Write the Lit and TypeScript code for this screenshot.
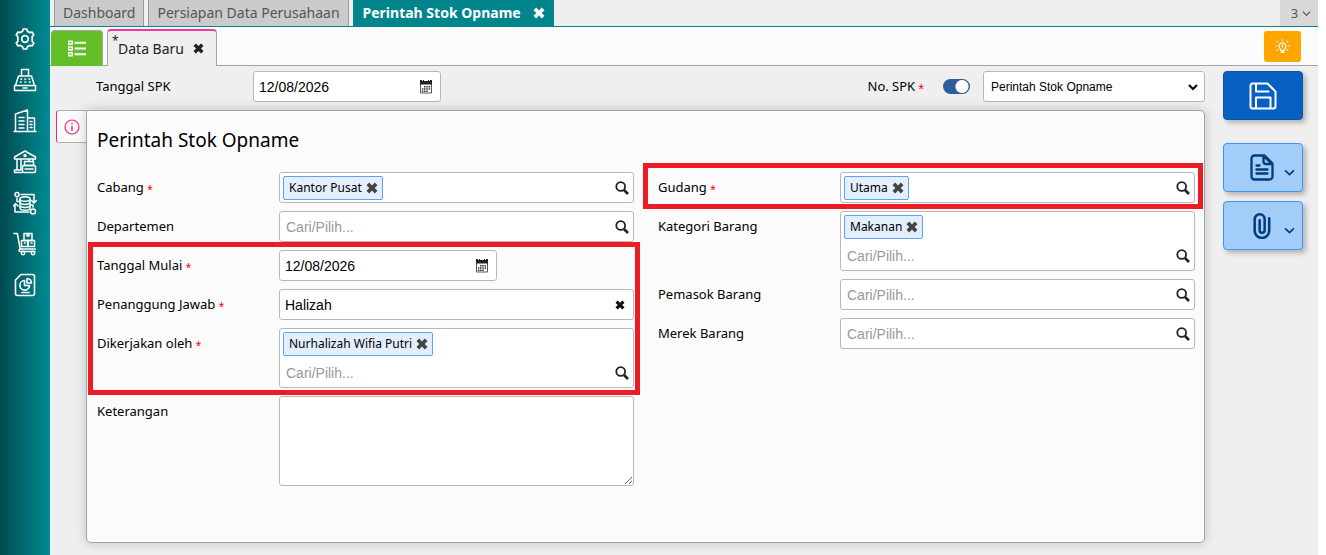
import { LitElement, html, css, svg, nothing } from "lit";
import { customElement, property } from "lit/decorators.js";

const stroke = (body: unknown, size = 24, box = 24) => html`<svg
  class="icon"
  width=${size}
  height=${size}
  viewBox="0 0 ${box} ${box}"
  fill="none"
  stroke="currentColor"
  stroke-linecap="round"
  stroke-linejoin="round"
  aria-hidden="true"
>${body}</svg>`;

const gear = svg`<g stroke-width="1.7"><path d="M9.6 4.2 10.3 2h3.4l.7 2.2 2.4 1.4 2.3-.5 1.7 2.9-1.6 1.7v4.6l1.6 1.7-1.7 2.9-2.3-.5-2.4 1.4-.7 2.2h-3.4l-.7-2.2-2.4-1.4-2.3.5L3.200 16l1.600-1.700V9.700L3.200 8l1.700-2.900 2.300.5z"/><circle cx="12" cy="12" r="3.300"/></g>`;
const register = svg`<g stroke-width="1.5"><path d="M8.500 8V1.500h7V8M5.500 8h13l3 9.500h-19zM1.500 17.500h21v5h-21zM10 20h4"/><path d="M8 11h.5M12 11h.5M16 11h.5M7.500 14h.5M12 14h.5M16.500 14h.5" stroke-width="1.700"/></g>`;
const building = svg`<g stroke-width="1.500"><path d="M1 22.500h22M2.500 22.500V5L14.500 1v21.500M14.500 9H21.500v13.500"/><path d="M6 8.500h5M6 12h5M6 15.500h5M6 19h5M17 12.500h2M17 15.500h2M17 18.500h2"/></g>`;
const bank = svg`<g stroke-width="1.500"><path d="M1.500 9V7L12 1l10.500 6v2zM4 9v11M8 9v11M1.500 22.500V20H8M1.500 22.500H9M16 9v2M20 9v2"/><circle cx="12" cy="5.500" r="1"/><rect x="11.500" y="11.500" width="9" height="4"/><rect x="9.500" y="15.500" width="13" height="7" rx="1.500"/><path d="M12 19h8"/></g>`;
const cycle = svg`<g stroke-width="1.500"><circle cx="4" cy="3.500" r="2"/><circle cx="20" cy="20.500" r="2.500"/><path d="M8 3.500h13v8M18.500 9.500l2.500 2.500 2.500-2.500M16 21H2v-8M.500 15L2.500 12.500 5 15"/><ellipse cx="12" cy="8" rx="5" ry="2.300"/><path d="M7 8v9c0 3 10 3 10 0V8M7 11.500c1 2.500 9 2.500 10 0M7 14.500c1 2.500 9 2.500 10 0M4 7v3.500h3M20 16v-2h-3"/></g>`;
const trolley = svg`<g stroke-width="1.500"><path d="M.800 1.500h3.500l3 15.500h15"/><rect x="11" y="1.500" width="8" height="7"/><rect x="8.500" y="8.500" width="6.500" height="6"/><rect x="15" y="8.500" width="6.500" height="6"/><path d="M14 1.500v2.500h2V1.500M11.500 11h1M18 11h1M7.500 17c-2 0-2 2.500 0 2.500h14.500"/><circle cx="10" cy="21" r="1.700"/><circle cx="20" cy="21" r="1.700"/></g>`;
const report = svg`<g stroke-width="1.600"><path d="M8 1.500h11.500a2 2 0 0 1 2 2v17a2 2 0 0 1-2 2H4.500a2 2 0 0 1-2-2V7z"/><path d="M11.500 7.500a4.800 4.800 0 1 0 5 5h-5zM14 5.500v4.500h4.500A4.500 4.500 0 0 0 14 5.500zM9 19.500h7"/></g>`;

const cross = (size: number) => html`<svg class="icon" width=${size} height=${size} viewBox="0 0 12 12" aria-hidden="true">
  <path fill="currentColor" d="M3.200.500 6 3.400 8.800.500 11.500 3.200 8.600 6l2.900 2.800-2.700 2.700L6 8.600l-2.800 2.900L.500 8.800 3.400 6 .500 3.200z" /></svg>`;
const magnifier = html`<svg class="icon" width="14" height="14" viewBox="0 0 14 14" fill="none" stroke="currentColor" aria-hidden="true">
  <circle cx="5.700" cy="5.500" r="4.400" stroke-width="1.800" /><path d="M9 9l4 4" stroke-width="2.600" /></svg>`;
const calendar = html`<svg class="icon" width="14" height="14" viewBox="0 0 14 14" aria-hidden="true">
  <path fill="#fff" stroke="#555" d="M1.500 3.500h11v9.500h-11z" /><path fill="#222" d="M1 0h2v1h1V0h1v1h4V0h1v1h1V0h2v4.500H1z" />
  <path fill="#333" d="M5 6h1.500v1.500H5zM7.300 6h1.500v1.500H7.300zM9.600 6h1.500v1.500H9.600zM2.900 8.200h1.500v1.500H2.900zM5 8.200h1.500v1.500H5zM7.300 8.200h1.500v1.500H7.300zM9.600 8.200h1.500v1.500H9.600zM2.900 10.400h1.500v1.500H2.900zM5 10.400h1.500v1.500H5zM7.300 10.400h1.500v1.500H7.300z" /></svg>`;
const chevron = (w: number, sw = 1.5) => html`<svg class="icon" width=${w} height=${w} viewBox="0 0 10 10" fill="none" stroke="currentColor" stroke-width=${sw} aria-hidden="true">
  <path d="M1 3l4 4 4-4" /></svg>`;
const save = stroke(svg`<g stroke-width="2"><path d="M3.500 1.500h15l8 8v15a2 2 0 0 1-2 2h-21a2 2 0 0 1-2-2v-21a2 2 0 0 1 2-2z"/><path d="M7 2v7.500h12.500M7 26V15.500h14.500V26"/></g>`, 28, 28);
const doc = stroke(svg`<g stroke-width="2.300"><path d="M4.500 1.500h10l8 8v13a3 3 0 0 1-3 3h-15a3 3 0 0 1-3-3v-18a3 3 0 0 1 3-3zM13.500 2v5.500a2.500 2.500 0 0 0 2.500 2.500h6z"/><path d="M6.500 11.500h3M6.500 15.500h11M6.500 19.500h11"/></g>`, 27, 27);
const clip = stroke(svg`<path stroke-width="2.400" d="M18.500 6v12a7 7 0 0 1-14 0V7a4.800 4.800 0 0 1 9.600 0v10.500a2.400 2.400 0 0 1-4.800 0V8"/>`, 27, 26);
const bulb = stroke(svg`<g stroke-width="1.100"><path d="M5.300 9.700C3.500 8.200 3.500 5.800 4.800 4.400a3.100 3.100 0 0 1 4.400 0c1.300 1.400 1.300 3.800-.5 5.300v1.300H5.300zM7 5v2.500M5.800 12.500h2.400M7 .600v.8M2 2l.6.600M12 2l-.6.600M.800 6.500h.9M12.300 6.500h.9M2 10.500l.6-.5M12 10.500l-.6-.5"/></g>`, 15, 14);
const list = html`<svg class="icon" width="18" height="17" viewBox="0 0 18 17" fill="none" stroke="currentColor" aria-hidden="true">
  <path stroke-width="1.400" d="M.700 1.200h3.500v3H.700zM.700 7h3.500v3H.700zM.700 12.800h3.500v3H.700z" /><path stroke-width="2" d="M6.500 2.700H18M6.500 8.500H18M6.500 14.300H18" /></svg>`;
const info = stroke(svg`<circle cx="8" cy="8" r="7" stroke-width="1.200"/><path stroke-width="1.500" d="M8 7.200v4M8 4.500v.2"/>`, 16, 16);

const controls = css`
  :host { display: block; }
  * { box-sizing: border-box; }
  .icon { display: block; flex: none; }
  button {
    display: flex; align-items: center; justify-content: center;
    margin: 0; padding: 0; border: 0; background: none; color: inherit; font: inherit; cursor: pointer;
  }
  input, select, textarea { font-family: "Liberation Sans", Arial, sans-serif; font-size: 14px; color: #000; margin: 0; }
  .box { display: flex; background: #fff; border: 1px solid #b8b8b8; border-radius: 3px; min-height: 31px; }
  .text { flex: 1; min-width: 0; border: 0; outline: 0; background: none; padding: 0 6px; }
  .text::placeholder { color: #999; }
`;

@customElement("date-field")
class DateField extends LitElement {
  @property() value = "";
  @property() label = "";
  static styles = [controls, css`
    .box { height: 31px; }
    .text { padding-left: 5px; }
    .pick { padding: 0 7px; }
  `];
  render() {
    return html`<div class="box">
      <input class="text" type="text" aria-label=${this.label} .value=${this.value} />
      <button class="pick" aria-label="Kalender">${calendar}</button>
    </div>`;
  }
}

@customElement("lookup-field")
class LookupField extends LitElement {
  @property() label = "";
  @property() chip = "";
  @property({ type: Boolean }) multiple = false;
  static styles = [controls, css`
    .box { padding: 0 3px; }
    .stacked { flex-direction: column; }
    .chips { display: flex; align-items: center; height: 29px; }
    .chip {
      display: flex; align-items: center; gap: 4px; height: 24px; padding: 0 4px 0 5px;
      border: 1px solid #62a1f2; border-radius: 2px; background: #e3effd;
      font-size: 12px; white-space: nowrap;
    }
    .remove { color: #444; }
    .line { display: flex; flex: 1; min-width: 0; height: 29px; }
    .stacked .line { flex: none; }
    .text { padding: 0 3px; }
    .find { padding: 0 1px; color: #222; }
  `];
  render() {
    return html`<div class="box ${this.multiple ? "stacked" : ""}">
      ${this.chip
        ? html`<div class="chips"><span class="chip">${this.chip}<button class="remove" aria-label="Hapus ${this.chip}">${cross(12)}</button></span></div>`
        : nothing}
      <div class="line">
        <input class="text" type="text" aria-label=${this.label} placeholder=${this.chip && !this.multiple ? "" : "Cari/Pilih..."} />
        <button class="find" aria-label="Cari ${this.label}">${magnifier}</button>
      </div>
    </div>`;
  }
}

@customElement("app-root")
class AppRoot extends LitElement {
  static styles = [controls, css`
    :host {
      display: flex; min-height: 100vh; background: #fff; color: #000;
      font-family: "Noto Sans", sans-serif; font-size: 13px;
    }
    .side {
      flex: none; width: 50px; padding-top: 27px; color: #fff;
      display: flex; flex-direction: column; align-items: center; gap: 17px;
      background: linear-gradient(90deg, #004b50, #008b93);
    }
    .main { flex: 1; min-width: 0; display: flex; flex-direction: column; margin-right: 8px; background: #efefef; }

    .tabs { display: flex; gap: 4px; height: 27px; padding-left: 4px; border-bottom: 1px solid #00868c; }
    .tab {
      display: flex; align-items: center; padding: 0 8px 1px; background: #cbcbcb; color: #555;
      border-left: 1px solid #999; border-right: 1px solid #999; font-size: 14px; white-space: nowrap;
    }
    .tab.current { gap: 12px; padding: 0 8px 1px 9px; background: #00858c; color: #fff; border-color: #00858c; font-weight: 700; }
    .count { gap: 4px; width: 38px; padding-left: 4px; margin-left: auto; background: #d8d8d8; color: #555; }

    .subtabs { display: flex; gap: 4px; height: 39px; padding: 2px 17px 0 1px; background: #fbfbfb; border-bottom: 1px solid #a5a5a5; }
    .listing { width: 52px; height: 36px; margin-top: 1px; background: #64be28; color: #fff; border-radius: 4px 4px 0 0; border: 1px solid #a5a5a5; border-width: 1px 1px 0 0; }
    .draft {
      display: flex; align-items: center; gap: 9px; height: 37px; padding: 0 12px 0 4px; color: #222;
      border: 1px solid #a5a5a5; border-top: 2px solid #ee3a9a; border-bottom: 0;
      border-radius: 4px 4px 0 0; background: #efefef; font-size: 14px;
    }
    .name { display: flex; }
    .dirty { width: 6px; margin-top: -7px; font-size: 12px; }
    .tip { width: 37px; height: 31px; margin: 2px 0 0 auto; border-radius: 3px; background: #ffa500; color: #fff; }

    .page { flex: 1; display: flex; gap: 18px; padding: 5px 15px 12px 6px; }
    .form { flex: 1; min-width: 0; display: flex; flex-direction: column; gap: 8px; }
    .head { display: flex; align-items: center; padding-left: 40px; }
    .head .date { width: 188px; }
    .spk { margin-left: auto; display: flex; align-items: center; }
    .caption { line-height: 31px; white-space: nowrap; }
    .first { width: 157px; }
    .req { color: #f00; font-family: "Liberation Sans", Arial, sans-serif; font-size: 14px; line-height: 1; vertical-align: -3px; }
    .switch {
      appearance: none; width: 27px; height: 15px; margin: 0 13px 0 19px; border-radius: 8px;
      background: radial-gradient(circle at 19px 50%, #fff 6px, #2f5d9b 7px);
    }
    .kind {
      appearance: none; width: 100%; height: 31px; padding: 0 24px 0 7px; font-size: 12px;
      border: 1px solid #b8b8b8; border-radius: 3px; background: #fff;
    }
    .choice { display: grid; align-items: center; width: 222px; }
    .choice > * { grid-area: 1 / 1; }
    .arrow { justify-self: end; margin-right: 7px; pointer-events: none; }

    .body { flex: 1; display: flex; align-items: stretch; }
    .mark {
      flex: none; align-self: flex-start; width: 30px; height: 33px; color: #ee2a7b;
      border: 1px solid #b0b0b0; border-left: 1px solid #ee2a7b; border-right: 0;
      border-radius: 3px 0 0 3px; background: #fbfbfb;
    }
    .card {
      flex: 1; min-width: 0; padding: 12px 9px 12px 10px; border: 1px solid #a5a5a5;
      border-radius: 0 5px 5px 5px; background: #fbfbfb; box-shadow: 0 0 12px rgba(0, 0, 0, 0.2);
    }
    h1 { margin: 0 0 15px; font-size: 19px; font-weight: 400; line-height: 34px; }
    .columns { display: grid; grid-template-columns: 1fr 1fr; gap: 24px; align-items: start; }
    .column, .group { display: grid; gap: 8px; }
    .row { display: grid; grid-template-columns: 182px 1fr; align-items: start; }
    .group, .single { position: relative; }
    .group::after, .single::after { content: ""; position: absolute; border: 5px solid #ed1c24; pointer-events: none; }
    .group::after { inset: -8px -6px -7px -9px; }
    .single::after { inset: -9px -8px -6px -15px; }
    .short { width: 218px; }
    .text.person { padding-left: 5px; }
    .clear { padding: 0 8px; color: #111; }
    .note { display: block; width: 100%; height: 90px; border: 1px solid #b8b8b8; border-radius: 3px; background: #fff; }

    .actions { flex: none; width: 80px; display: flex; flex-direction: column; gap: 9px; }
    .action {
      height: 49px; border: 1px solid #3d97f8; border-radius: 4px; background: #a2cdf9; color: #003c7c;
      box-shadow: 3px 3px 5px rgba(0, 0, 0, 0.25); gap: 7px; padding-left: 19px;
    }
    .action .icon:last-child { margin-top: 10px; }
    .action.primary { margin-bottom: 14px; padding: 0; border-color: #0456ad; background: #0560c1; color: #fff; }
    .action.primary .icon { margin: 0; }
  `];

  private row(label: string, required: boolean, field: unknown, extra = "") {
    return html`<div class="row ${extra}">
      <span class="caption">${label}${required ? html` <span class="req">*</span>` : nothing}</span>${field}
    </div>`;
  }

  render() {
    const menu: [string, unknown][] = [
      ["Pengaturan", gear], ["Kasir", register], ["Perusahaan", building], ["Bank", bank],
      ["Siklus", cycle], ["Persediaan", trolley], ["Laporan", report],
    ];
    return html`
      <nav class="side">${menu.map(([name, icon]) => html`<button aria-label=${name}>${stroke(icon)}</button>`)}</nav>
      <div class="main">
        <div class="tabs">
          <button class="tab">Dashboard</button>
          <button class="tab">Persiapan Data Perusahaan</button>
          <button class="tab current">Perintah Stok Opname ${cross(12)}</button>
          <button class="count">3 ${chevron(9, 1.3)}</button>
        </div>
        <div class="subtabs">
          <button class="listing" aria-label="Daftar">${list}</button>
          <div class="draft"><span class="name"><span class="dirty">*</span>Data Baru</span><button aria-label="Tutup">${cross(11)}</button></div>
          <button class="tip" aria-label="Petunjuk">${bulb}</button>
        </div>
        <div class="page">
          <div class="form">
            <div class="head">
              <span class="caption first">Tanggal SPK</span>
              <date-field class="date" label="Tanggal SPK" value="12/08/2026"></date-field>
              <div class="spk">
                <label class="caption" for="auto">No. SPK <span class="req">*</span></label>
                <input class="switch" id="auto" type="checkbox" role="switch" checked />
                <div class="choice">
                  <select class="kind" aria-label="No. SPK"><option>Perintah Stok Opname</option></select>
                  <span class="arrow">${chevron(10, 2)}</span>
                </div>
              </div>
            </div>
            <div class="body">
              <button class="mark" aria-label="Info">${info}</button>
              <section class="card">
                <h1>Perintah Stok Opname</h1>
                <div class="columns">
                  <div class="column">
                    ${this.row("Cabang", true, html`<lookup-field label="Cabang" chip="Kantor Pusat"></lookup-field>`)}
                    ${this.row("Departemen", false, html`<lookup-field label="Departemen"></lookup-field>`)}
                    <div class="group">
                      ${this.row("Tanggal Mulai", true, html`<date-field class="short" label="Tanggal Mulai" value="12/08/2026"></date-field>`)}
                      ${this.row("Penanggung Jawab", true, html`<div class="box"><input class="text person" type="text" aria-label="Penanggung Jawab" .value=${"Halizah"} /><button class="clear" aria-label="Kosongkan">${cross(10)}</button></div>`)}
                      ${this.row("Dikerjakan oleh", true, html`<lookup-field label="Dikerjakan oleh" chip="Nurhalizah Wifia Putri" multiple></lookup-field>`)}
                    </div>
                    ${this.row("Keterangan", false, html`<textarea class="note" aria-label="Keterangan"></textarea>`)}
                  </div>
                  <div class="column">
                    ${this.row("Gudang", true, html`<lookup-field label="Gudang" chip="Utama"></lookup-field>`, "single")}
                    ${this.row("Kategori Barang", false, html`<lookup-field label="Kategori Barang" chip="Makanan" multiple></lookup-field>`)}
                    ${this.row("Pemasok Barang", false, html`<lookup-field label="Pemasok Barang"></lookup-field>`)}
                    ${this.row("Merek Barang", false, html`<lookup-field label="Merek Barang"></lookup-field>`)}
                  </div>
                </div>
              </section>
            </div>
          </div>
          <div class="actions">
            <button class="action primary" aria-label="Simpan">${save}</button>
            <button class="action" aria-label="Dokumen">${doc}${chevron(11)}</button>
            <button class="action" aria-label="Lampiran">${clip}${chevron(11)}</button>
          </div>
        </div>
      </div>
    `;
  }
}
